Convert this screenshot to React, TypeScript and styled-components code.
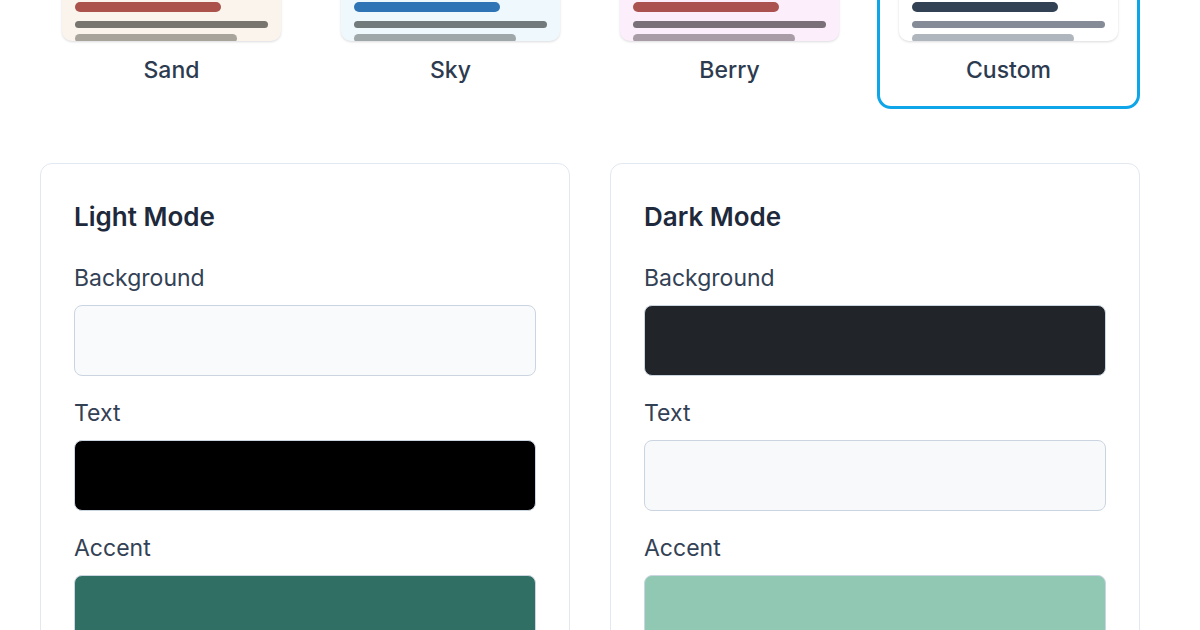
import React from 'react';
import styled, { createGlobalStyle } from 'styled-components';

const GlobalStyle = createGlobalStyle`
  body {
    margin: 0;
    background: #ffffff;
    font-family: Inter, "Noto Sans", "Liberation Sans", sans-serif;
    color: #334155;
  }
  * { box-sizing: border-box; }
`;

interface Theme {
  name: string;
  bg: string;
  title: string;
  line: string;
  faint: string;
}

const themes: Theme[] = [
  { name: 'Sand', bg: '#fbf4ec', title: '#ab524b', line: '#78756f', faint: '#a8a49c' },
  { name: 'Sky', bg: '#eff9fd', title: '#2f74b5', line: '#737a7c', faint: '#a0a7a8' },
  { name: 'Berry', bg: '#fdeefc', title: '#ab5250', line: '#7a7178', faint: '#a99ca7' },
  { name: 'Custom', bg: '#ffffff', title: '#334155', line: '#858c98', faint: '#b0b6bd' },
];

interface Field {
  label: string;
  color: string;
}

const modes: { title: string; fields: Field[] }[] = [
  {
    title: 'Light Mode',
    fields: [
      { label: 'Background', color: '#f8fafb' },
      { label: 'Text', color: '#000000' },
      { label: 'Accent', color: '#2f6f64' },
    ],
  },
  {
    title: 'Dark Mode',
    fields: [
      { label: 'Background', color: '#212529' },
      { label: 'Text', color: '#f8f9fa' },
      { label: 'Accent', color: '#90c8b4' },
    ],
  },
];

export default function App() {
  return (
    <>
      <GlobalStyle />
      <Page>
        <ThemeGrid>
          {themes.map((t) => (
            <ThemeTile key={t.name} $active={t.name === 'Custom'}>
              <Preview $bg={t.bg}>
                <Dots>
                  <Dot $color={t.faint} />
                  <Dot $color={t.faint} />
                  <Dot $color={t.faint} />
                </Dots>
                <Bar $color={t.title} $width="146px" $height={10} />
                <Bar $color={t.line} $width="100%" $height={7} $gap={9} />
                <Bar $color={t.faint} $width="84%" $height={9} $gap={6} />
              </Preview>
              <TileLabel>{t.name}</TileLabel>
            </ThemeTile>
          ))}
        </ThemeGrid>

        <ModeGrid>
          {modes.map((m) => (
            <Panel key={m.title}>
              <PanelTitle>{m.title}</PanelTitle>
              {m.fields.map((f) => (
                <FieldRow key={f.label}>
                  <FieldLabel>{f.label}</FieldLabel>
                  <Swatch $color={f.color} />
                </FieldRow>
              ))}
            </Panel>
          ))}
        </ModeGrid>
      </Page>
    </>
  );
}

const Page = styled.div`
  width: 1100px;
  margin: -61px 0 0 40px;
  padding-bottom: 40px;
`;

const ThemeGrid = styled.div`
  display: grid;
  grid-template-columns: repeat(4, 1fr);
  gap: 16px;
`;

const ThemeTile = styled.div<{ $active?: boolean }>`
  display: flex;
  flex-direction: column;
  align-items: stretch;
  padding: 19px 19px 20px;
  border: 3px solid ${(p) => (p.$active ? '#0ea5e9' : 'transparent')};
  border-radius: 14px;
  background: #ffffff;
`;

const Preview = styled.div<{ $bg: string }>`
  height: 80px;
  padding: 14px 13px 0;
  display: flex;
  flex-direction: column;
  overflow: hidden;
  border-radius: 10px;
  background: ${(p) => p.$bg};
  box-shadow: 0 1px 3px rgba(15, 23, 42, 0.1), 0 1px 2px rgba(15, 23, 42, 0.05);
`;

const Dots = styled.div`
  display: flex;
  gap: 5px;
  height: 10px;
  margin-bottom: 17px;
`;

const Dot = styled.span<{ $color: string }>`
  width: 10px;
  height: 10px;
  border-radius: 50%;
  background: ${(p) => p.$color};
`;

const Bar = styled.div<{ $color: string; $width: string; $height: number; $gap?: number }>`
  flex: none;
  width: ${(p) => p.$width};
  height: ${(p) => p.$height}px;
  margin-top: ${(p) => p.$gap ?? 0}px;
  border-radius: 999px;
  background: ${(p) => p.$color};
`;

const TileLabel = styled.div`
  margin-top: 13px;
  text-align: center;
  font-size: 23px;
  line-height: 32px;
  font-weight: 500;
  color: #2d3b50;
`;

const ModeGrid = styled.div`
  display: grid;
  grid-template-columns: 1fr 1fr;
  gap: 40px;
  margin-top: 54px;
`;

const Panel = styled.section`
  display: flex;
  flex-direction: column;
  padding: 35px 33px 40px;
  border: 1px solid #e2e8f0;
  border-radius: 12px;
  background: #ffffff;
`;

const PanelTitle = styled.h2`
  margin: 0 0 28px;
  font-size: 26px;
  line-height: 36px;
  font-weight: 600;
  color: #1e293b;
`;

const FieldRow = styled.div`
  display: flex;
  flex-direction: column;
  gap: 12px;
  margin-bottom: 22px;
`;

const FieldLabel = styled.label`
  font-size: 23px;
  line-height: 30px;
  color: #334155;
`;

const Swatch = styled.div<{ $color: string }>`
  height: 71px;
  border: 1px solid #cbd5e1;
  border-radius: 8px;
  background: ${(p) => p.$color};
`;
